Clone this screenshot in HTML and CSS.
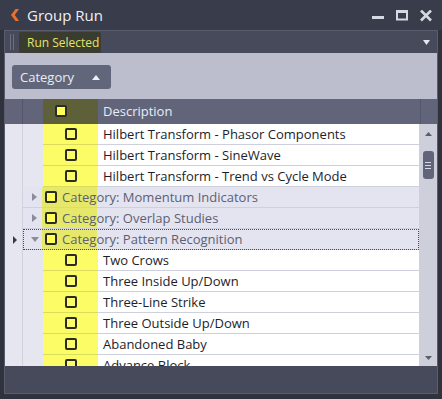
FILE: index.html
```html
<!DOCTYPE html>
<html>
<head>
<meta charset="utf-8">
<link rel="stylesheet" href="styles.css">
</head>
<body>
<div class="window">
  <div class="titlebar">
    <svg class="back" width="8" height="12" viewBox="0 0 8 12"><polygon points="4.5,0 8,0 3.8,6 8,12 4.5,12 0,6" fill="#e8702a"/></svg>
    <span class="title">Group Run</span>
    <div class="controls">
      <svg class="ctl" width="12" height="12" viewBox="0 0 12 12"><rect x="0" y="6" width="12" height="3" fill="#d6d8e2"/></svg>
      <svg class="ctl" width="12" height="12" viewBox="0 0 12 12"><rect x="1" y="1.5" width="10" height="8" fill="none" stroke="#d6d8e2" stroke-width="2"/><rect x="0" y="0" width="12" height="3" fill="#d6d8e2"/></svg>
      <svg class="ctl" width="12" height="12" viewBox="0 0 12 12"><path d="M1 0.5 L11 10.5 M11 0.5 L1 10.5" stroke="#d6d8e2" stroke-width="2.6"/></svg>
    </div>
  </div>
  <div class="frame">
    <div class="toolbar">
      <span class="grip"></span>
      <span class="run">Run Selected</span>
      <svg class="tbdrop" width="7" height="5" viewBox="0 0 7 5"><polygon points="0,0 7,0 3.5,5" fill="#e6e8f0"/></svg>
    </div>
    <div class="groupbar">
      <div class="catbtn"><span>Category</span><svg width="8" height="5" viewBox="0 0 8 5"><polygon points="0,5 8,5 4,0" fill="#eef0f8"/></svg></div>
    </div>
    <div class="header">
      <div class="hA"></div>
      <div class="hB"></div>
      <div class="hC"><span class="cb filled"></span></div>
      <div class="hD">Description</div>
      <div class="hS"></div>
    </div>
    <div class="body">
      <div class="rows">
        <div class="row data"><div class="cA"></div><div class="cB"></div><div class="cC"><span class="cb"></span></div><div class="cD">Hilbert Transform - Phasor Components</div></div>
        <div class="row data"><div class="cA"></div><div class="cB"></div><div class="cC"><span class="cb"></span></div><div class="cD">Hilbert Transform - SineWave</div></div>
        <div class="row data"><div class="cA"></div><div class="cB"></div><div class="cC"><span class="cb"></span></div><div class="cD">Hilbert Transform - Trend vs Cycle Mode</div></div>
        <div class="row cat"><div class="cA"></div><div class="gcell"><span class="exp closed"></span><span class="cb bright"></span><span class="gtext">Category: Momentum Indicators</span></div></div>
        <div class="row cat"><div class="cA"></div><div class="gcell"><span class="exp closed"></span><span class="cb bright"></span><span class="gtext">Category: Overlap Studies</span></div></div>
        <div class="row cat"><div class="cA"><span class="ind"></span></div><div class="gcell focus"><span class="exp open"></span><span class="cb bright"></span><span class="gtext">Category: Pattern Recognition</span></div></div>
        <div class="row data"><div class="cA"></div><div class="cB"></div><div class="cC"><span class="cb"></span></div><div class="cD">Two Crows</div></div>
        <div class="row data"><div class="cA"></div><div class="cB"></div><div class="cC"><span class="cb"></span></div><div class="cD">Three Inside Up/Down</div></div>
        <div class="row data"><div class="cA"></div><div class="cB"></div><div class="cC"><span class="cb"></span></div><div class="cD">Three-Line Strike</div></div>
        <div class="row data"><div class="cA"></div><div class="cB"></div><div class="cC"><span class="cb"></span></div><div class="cD">Three Outside Up/Down</div></div>
        <div class="row data"><div class="cA"></div><div class="cB"></div><div class="cC"><span class="cb"></span></div><div class="cD">Abandoned Baby</div></div>
        <div class="row data"><div class="cA"></div><div class="cB"></div><div class="cC"><span class="cb"></span></div><div class="cD">Advance Block</div></div>
      </div>
      <div class="scrollbar">
        <svg class="sarrow" width="7" height="4" viewBox="0 0 7 4"><polygon points="0,4 7,4 3.5,0" fill="#5a5d6c"/></svg>
        <div class="thumb"><span></span><span></span><span></span></div>
        <svg class="sarrow down" width="7" height="4" viewBox="0 0 7 4"><polygon points="0,0 7,0 3.5,4" fill="#5a5d6c"/></svg>
      </div>
    </div>
    <div class="bottombar"></div>
  </div>
</div>
</body>
</html>
```

FILE: styles.css
```css
* { box-sizing: border-box; }
html, body { margin: 0; padding: 0; }
body {
  background: #23252d;
  font-family: "Open Sans", "Noto Sans", sans-serif;
  width: 442px;
  height: 399px;
  overflow: hidden;
}
.window {
  width: 442px;
  height: 399px;
  background: #30323e;
  display: flex;
  flex-direction: column;
}
.titlebar {
  height: 30px;
  background: #393c4a;
  display: flex;
  align-items: center;
  padding-left: 11px;
}
.title {
  color: #eef0f6;
  font-size: 15px;
  margin-left: 8px;
  margin-top: -1px;
}
.controls {
  margin-left: auto;
  display: flex;
  gap: 12px;
  padding-right: 10px;
  margin-top: 2px;
}
.frame {
  margin: 0 4px 5px 4px;
  border: 1px solid #5a5d6e;
  flex: 1;
  display: flex;
  flex-direction: column;
  background: #474a5a;
}
.toolbar {
  height: 22px;
  background: #474a5a;
  display: flex;
  align-items: center;
  padding-left: 5px;
}
.grip {
  width: 4px;
  height: 16px;
  border-left: 1px solid #6c6f80;
  border-right: 1px solid #6c6f80;
}
.run {
  margin-left: 5px;
  height: 21px;
  width: 82px;
  background: #3a3c30;
  border-radius: 2px;
  color: #e4e46c;
  font-size: 12px;
  white-space: nowrap;
  display: flex;
  align-items: center;
  padding-left: 8px;
}
.tbdrop { margin-left: auto; margin-right: 7px; }
.groupbar {
  height: 46px;
  background: #bcbecd;
  padding: 12px 0 0 7px;
}
.catbtn {
  width: 99px;
  height: 24px;
  background: #62667a;
  border-radius: 3px;
  color: #e8ecf6;
  font-size: 13px;
  display: flex;
  align-items: center;
  padding-left: 8px;
}
.catbtn svg { margin-left: auto; margin-right: 11px; }
.header {
  height: 25px;
  background: #62657a;
  display: grid;
  grid-template-columns: 18px 20px 55px 1fr 17px;
}
.hA { border-right: 1px solid #54576b; }
.hC { background: #5e603a; display: flex; align-items: center; padding: 0 0 2px 12px; }
.hD { color: #e8ecf8; font-size: 13px; padding: 0 0 2px 5px; display: flex; align-items: center; }
.hS { border-left: 1px solid #54576b; }
.body {
  height: 242px;
  display: flex;
  overflow: hidden;
  background: #ffffff;
}
.rows { flex: 1; }
.row { height: 21px; display: grid; }
.row.data { grid-template-columns: 18px 20px 55px 1fr; }
.row.cat { grid-template-columns: 18px 1fr; }
.cA {
  background: #e6e6f0;
  border-right: 1px solid #d2d2de;
  display: flex;
  align-items: center;
  justify-content: center;
}
.cB { background: #e6e6f0; }
.cC {
  background: #fcfc66;
  border-bottom: 1px solid #dcdc5c;
  display: flex;
  align-items: center;
  justify-content: center;
}
.cD {
  border-bottom: 1px solid #cfd0de;
  color: #1c1e2c;
  font-size: 13px;
  padding-left: 5px;
  display: flex;
  align-items: center;
  white-space: nowrap;
}
.gcell {
  background: linear-gradient(to right, #e4e4f0 19px, #e6e86a 19px, #e6e86a 74px, #e4e4f0 74px);
  border-bottom: 1px solid #cfd0de;
  display: flex;
  align-items: center;
  white-space: nowrap;
}
.gcell.focus { outline: 1px dotted #4a4c58; outline-offset: -1px; }
.gtext { color: #5c6072; font-size: 13px; margin-left: 5px; }
.exp { width: 21px; display: flex; justify-content: center; margin-left: 1px; }
.exp.closed::before {
  content: "";
  border-left: 5px solid #8a8c9a;
  border-top: 4px solid transparent;
  border-bottom: 4px solid transparent;
}
.exp.open::before {
  content: "";
  border-top: 5px solid #8a8c9a;
  border-left: 4px solid transparent;
  border-right: 4px solid transparent;
}
.ind {
  border-left: 4px solid #3a3c44;
  border-top: 4px solid transparent;
  border-bottom: 4px solid transparent;
  margin-left: 2px;
}
.cb {
  width: 12px;
  height: 12px;
  border: 2px solid #2c2c26;
  border-radius: 2px;
  display: inline-block;
}
.cb.filled { background: #ffff58; }
.cb.bright { background: #ffff58; }
.scrollbar {
  width: 18px;
  background: #cdcfdb;
  display: flex;
  flex-direction: column;
  align-items: center;
  padding-top: 8px;
}
.thumb {
  margin-top: 15px;
  width: 11px;
  height: 28px;
  border-radius: 3px;
  background: #62657a;
  display: flex;
  flex-direction: column;
  justify-content: center;
  align-items: center;
  gap: 2px;
}
.thumb span { width: 6px; height: 1px; background: #d8dae4; }
.sarrow.down { margin-top: auto; margin-bottom: 6px; }
.bottombar {
  height: 27px;
  background: #474a5a;
}
```
